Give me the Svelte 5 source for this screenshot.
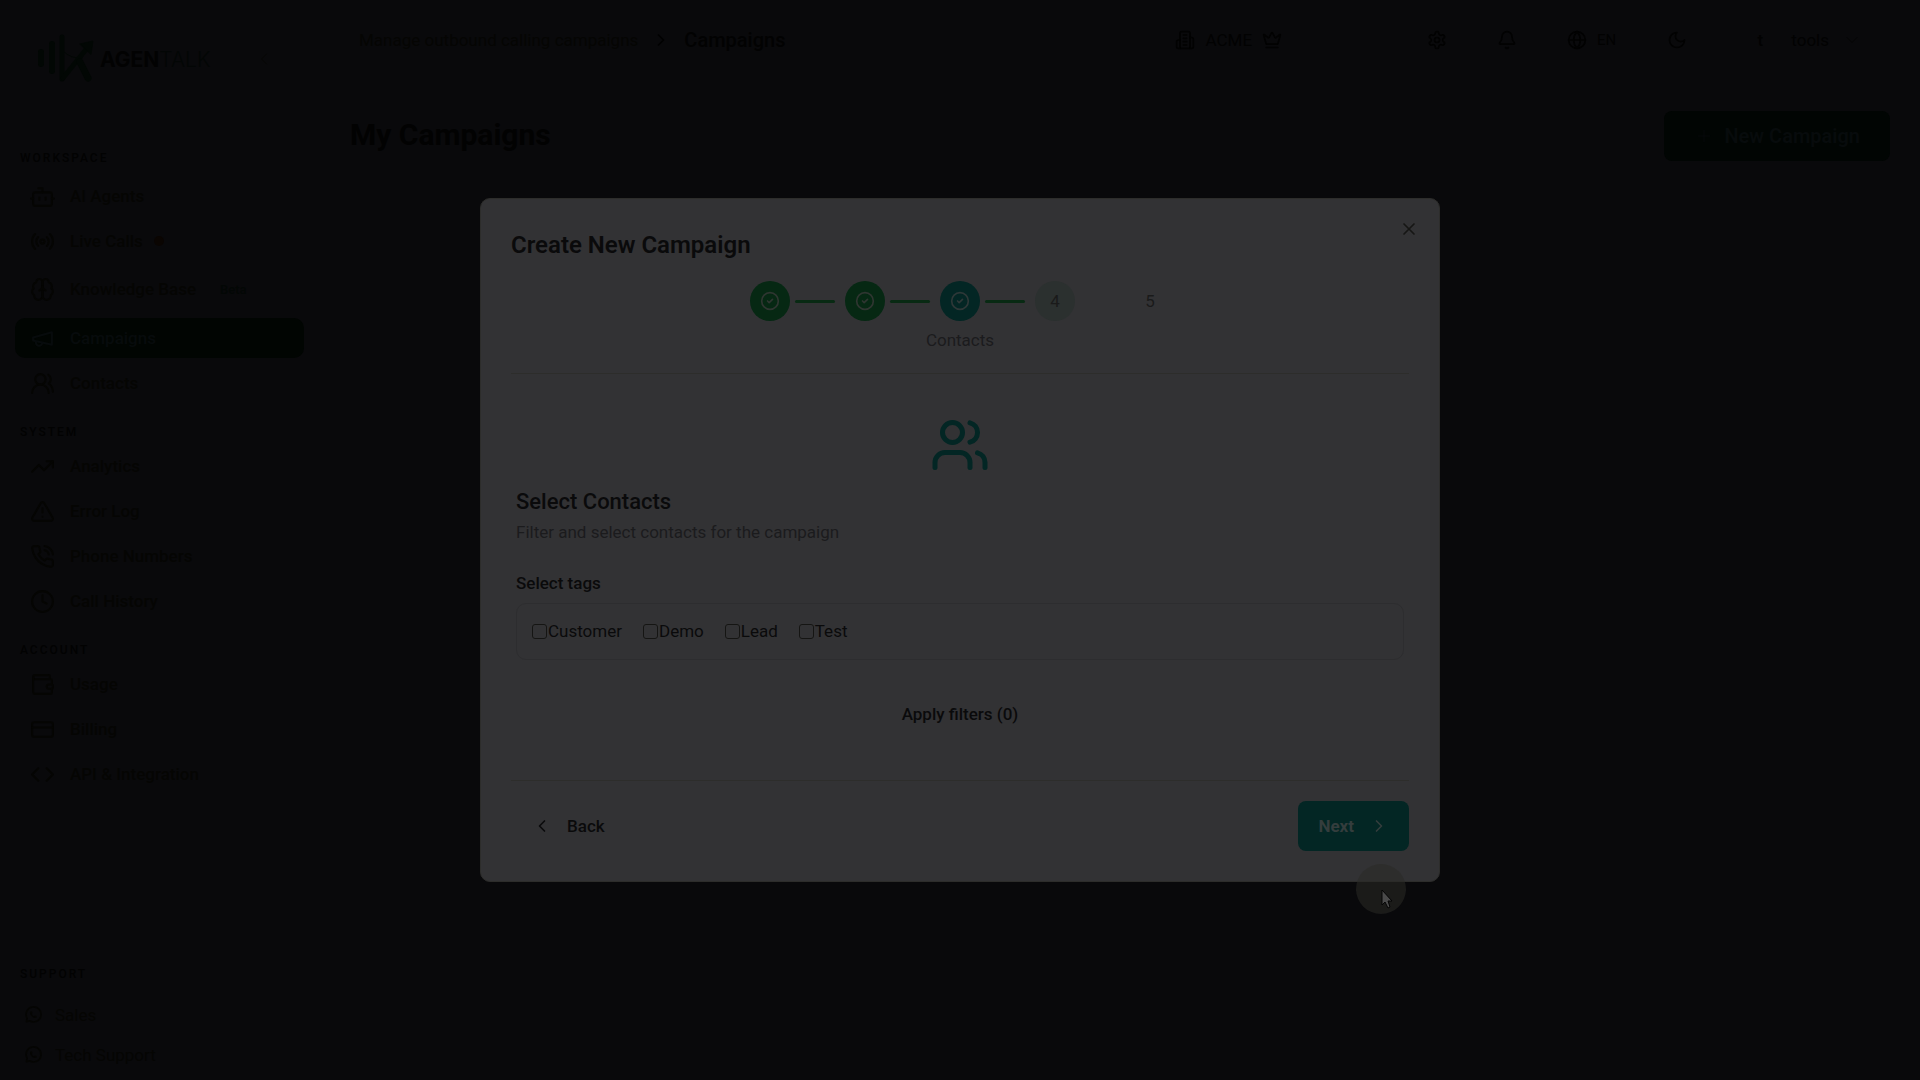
<script lang="ts">
  type NavItem = { icon: string; label: string; live?: boolean; beta?: boolean; active?: boolean }
  type NavGroup = { title: string; items: NavItem[] }

  const icons: Record<string, string> = {
    bot: '<path d="M12 8V4H8"/><rect width="18" height="13" x="3" y="8" rx="2"/><path d="M1 14h2M21 14h2M15 13v2M9 13v2"/>',
    radio: '<path d="M4.9 19.1C1 15.2 1 8.8 4.9 4.9M7.8 16.2c-2.3-2.3-2.3-6.1 0-8.5M16.2 7.8c2.3 2.3 2.3 6.1 0 8.5M19.1 4.9C23 8.8 23 15.1 19.1 19"/><circle cx="12" cy="12" r="2"/>',
    brain: '<path d="M12 5a3 3 0 1 0-5.997.125 4 4 0 0 0-2.526 5.77 4 4 0 0 0 .556 6.588A4 4 0 1 0 12 18Z"/><path d="M12 5a3 3 0 1 1 5.997.125 4 4 0 0 1 2.526 5.77 4 4 0 0 1-.556 6.588A4 4 0 1 1 12 18Z"/><path d="M9 13a4.5 4.5 0 0 0 3-4 4.5 4.5 0 0 0 3 4"/>',
    megaphone: '<path d="m3 11 18-5v12L3 14v-3z"/><path d="M11.6 16.8a3 3 0 1 1-5.8-1.6"/>',
    usersRound: '<path d="M18 21a8 8 0 0 0-16 0"/><circle cx="10" cy="8" r="5"/><path d="M22 20c0-3.37-2-6.5-4-8a5 5 0 0 0-.45-8.3"/>',
    trending: '<path d="M16 7h6v6"/><path d="m22 7-8.5 8.5-5-5L2 17"/>',
    alert: '<path d="m21.73 18-8-14a2 2 0 0 0-3.48 0l-8 14A2 2 0 0 0 4 21h16a2 2 0 0 0 1.73-3Z"/><path d="M12 9v4M12 17h.01"/>',
    phone: '<path d="M22 16.92v3a2 2 0 0 1-2.18 2 19.79 19.79 0 0 1-8.63-3.07 19.5 19.5 0 0 1-6-6 19.79 19.79 0 0 1-3.07-8.67A2 2 0 0 1 4.11 2h3a2 2 0 0 1 2 1.72 12.84 12.84 0 0 0 .7 2.81 2 2 0 0 1-.45 2.11L8.09 9.91a16 16 0 0 0 6 6l1.27-1.27a2 2 0 0 1 2.11-.45 12.84 12.84 0 0 0 2.81.7A2 2 0 0 1 22 16.92z"/><path d="M14 2a9 9 0 0 1 8 8M14 6a5 5 0 0 1 4 4"/>',
    clock: '<circle cx="12" cy="12" r="10"/><path d="M12 6v6l4 2"/>',
    wallet: '<path d="M19 7V4a1 1 0 0 0-1-1H5a2 2 0 0 0 0 4h15a1 1 0 0 1 1 1v4h-3a2 2 0 0 0 0 4h3a1 1 0 0 0 1-1v-2a1 1 0 0 0-1-1"/><path d="M3 5v14a2 2 0 0 0 2 2h15a1 1 0 0 0 1-1v-4"/>',
    card: '<rect width="20" height="14" x="2" y="5" rx="2"/><path d="M2 10h20"/>',
    code: '<path d="m16 18 6-6-6-6M8 6l-6 6 6 6"/>',
    whatsapp: '<path d="M4 20 5 16a9 9 0 1 1 3 3Z"/><path d="M8.5 8c-1 4 4 8.500 7.500 7.500l.5-2-2-1-1.5 1q-2-1-2.5-3l1-1-1-2z" fill="currentColor" stroke="none"/>',
    chevronLeft: '<path d="m15 18-6-6 6-6"/>',
    chevronRight: '<path d="m9 18 6-6-6-6"/>',
    chevronDown: '<path d="m6 9 6 6 6-6"/>',
    building: '<path d="M6 22V4a2 2 0 0 1 2-2h8a2 2 0 0 1 2 2v18Z"/><path d="M6 12H4a2 2 0 0 0-2 2v6a2 2 0 0 0 2 2h2M18 9h2a2 2 0 0 1 2 2v9a2 2 0 0 1-2 2h-2M10 6h4M10 10h4M10 14h4M10 18h4"/>',
    crown: '<path d="M11.56 3.27a.5.5 0 0 1 .88 0L15.4 8.87a1 1 0 0 0 1.51.3L21.18 5.5a.5.5 0 0 1 .8.52l-2.83 10.25a1 1 0 0 1-.96.73H5.81a1 1 0 0 1-.96-.73L2.02 6.02a.5.5 0 0 1 .8-.52l4.28 3.66a1 1 0 0 0 1.51-.3z"/><path d="M5 21h14"/>',
    gear: '<path d="M12.22 2h-.44a2 2 0 0 0-2 2v.18a2 2 0 0 1-1 1.73l-.43.25a2 2 0 0 1-2 0l-.15-.08a2 2 0 0 0-2.73.73l-.22.38a2 2 0 0 0 .73 2.73l.15.1a2 2 0 0 1 1 1.72v.51a2 2 0 0 1-1 1.74l-.15.09a2 2 0 0 0-.73 2.73l.22.38a2 2 0 0 0 2.73.73l.15-.08a2 2 0 0 1 2 0l.43.25a2 2 0 0 1 1 1.73V20a2 2 0 0 0 2 2h.44a2 2 0 0 0 2-2v-.18a2 2 0 0 1 1-1.73l.43-.25a2 2 0 0 1 2 0l.15.08a2 2 0 0 0 2.73-.73l.22-.39a2 2 0 0 0-.73-2.73l-.15-.08a2 2 0 0 1-1-1.74v-.5a2 2 0 0 1 1-1.74l.15-.09a2 2 0 0 0 .73-2.73l-.22-.38a2 2 0 0 0-2.73-.73l-.15.08a2 2 0 0 1-2 0l-.43-.25a2 2 0 0 1-1-1.73V4a2 2 0 0 0-2-2z"/><circle cx="12" cy="12" r="3"/>',
    bell: '<path d="M10.27 21a2 2 0 0 0 3.46 0M3.26 15.33A1 1 0 0 0 4 17h16a1 1 0 0 0 .74-1.67C19.41 13.96 18 12.5 18 8A6 6 0 0 0 6 8c0 4.5-1.41 5.96-2.74 7.33"/>',
    globe: '<circle cx="12" cy="12" r="10"/><path d="M12 2a14.5 14.5 0 0 0 0 20 14.5 14.5 0 0 0 0-20M2 12h20"/>',
    moon: '<path d="M12 3a6 6 0 0 0 9 9 9 9 0 1 1-9-9Z"/>',
    plus: '<path d="M5 12h14M12 5v14"/>',
    close: '<path d="M18 6 6 18M6 6l12 12"/>',
    check: '<circle cx="12" cy="12" r="10"/><path d="m9 12 2 2 4-4"/>',
    users: '<path d="M16 21v-2a4 4 0 0 0-4-4H6a4 4 0 0 0-4 4v2"/><circle cx="9" cy="7" r="4"/><path d="M22 21v-2a4 4 0 0 0-3-3.87M16 3.13a4 4 0 0 1 0 7.75"/>'
  }

  const groups: NavGroup[] = [
    {
      title: 'WORKSPACE',
      items: [
        { icon: 'bot', label: 'AI Agents' },
        { icon: 'radio', label: 'Live Calls', live: true },
        { icon: 'brain', label: 'Knowledge Base', beta: true },
        { icon: 'megaphone', label: 'Campaigns', active: true },
        { icon: 'usersRound', label: 'Contacts' }
      ]
    },
    {
      title: 'SYSTEM',
      items: [
        { icon: 'trending', label: 'Analytics' },
        { icon: 'alert', label: 'Error Log' },
        { icon: 'phone', label: 'Phone Numbers' },
        { icon: 'clock', label: 'Call History' }
      ]
    },
    {
      title: 'ACCOUNT',
      items: [
        { icon: 'wallet', label: 'Usage' },
        { icon: 'card', label: 'Billing' },
        { icon: 'code', label: 'API & Integration' }
      ]
    }
  ]

  const steps = [1, 2, 3, 4, 5]
  const current = 3
  const tags = ['Customer', 'Demo', 'Lead', 'Test']
  const applied = 0
  let selected: string[] = $state([])
</script>

{#snippet icon(name: string, size: number, stroke = 2)}
  <svg
    width={size}
    height={size}
    viewBox="0 0 24 24"
    fill="none"
    stroke="currentColor"
    stroke-width={stroke}
    stroke-linecap="round"
    stroke-linejoin="round"
    aria-hidden="true">{@html icons[name]}</svg
  >
{/snippet}

<div class="layout">
  <aside class="sidebar">
    <div class="brand">
      <svg class="mark" width="56" height="50" viewBox="0 0 56 50" fill="none" stroke="currentColor" stroke-linecap="round">
        <path d="M3 18v12M14 10v27" stroke-width="6" />
        <path d="M24 3v42" stroke-width="5" />
        <path d="M25 44 50 13" stroke-width="5" />
        <path d="m42 28 8 16" stroke-width="7" />
        <path d="m42 10 13-3-2 13z" fill="currentColor" stroke-width="1" />
        <path d="M25 17q8 8 19 7" stroke-width="1" />
      </svg>
      <span class="name">AGEN<span>TALK</span></span>
      <button class="plain collapse" aria-label="Collapse sidebar">{@render icon('chevronLeft', 20, 1)}</button>
    </div>

    <nav>
      {#each groups as group}
        <section>
          <h2>{group.title}</h2>
          {#each group.items as item}
            <a href="#top" class="item" class:active={item.active} class:tall={item.beta}>
              {@render icon(item.icon, 25, 2)}
              <span>{item.label}</span>
              {#if item.live}<i class="dot"></i>{/if}
              {#if item.beta}<span class="beta">Beta</span>{/if}
            </a>
          {/each}
        </section>
      {/each}
    </nav>

    <section class="support">
      <h2>SUPPORT</h2>
      <a href="#top">{@render icon('whatsapp', 20, 2)}Sales</a>
      <a href="#top">{@render icon('whatsapp', 20, 2)}Tech Support</a>
    </section>
  </aside>

  <div class="page">
    <header>
      <div class="crumbs">
        <span>Manage outbound calling campaigns</span>
        {@render icon('chevronRight', 20, 2)}
        <strong>Campaigns</strong>
      </div>
      <div class="tools">
        <button class="plain org">{@render icon('building', 20, 2)}<span>ACME</span>{@render icon('crown', 20, 2)}</button>
        <button class="plain square" aria-label="Settings">{@render icon('gear', 20, 2)}</button>
        <button class="plain square" aria-label="Notifications">{@render icon('bell', 20, 2)}</button>
        <button class="plain lang">{@render icon('globe', 20, 2)}EN</button>
        <button class="plain square" aria-label="Dark mode">{@render icon('moon', 20, 2)}</button>
        <button class="plain account"><b>t</b><span>tools</span>{@render icon('chevronDown', 20, 1)}</button>
      </div>
    </header>

    <main>
      <h1>My Campaigns</h1>
      <button class="new">{@render icon('plus', 20, 1)}New Campaign</button>
    </main>
  </div>
</div>

<div class="overlay">
  <div class="dialog" role="dialog" aria-labelledby="dialog-title">
    <button class="plain close" aria-label="Close">{@render icon('close', 20, 2)}</button>
    <h2 id="dialog-title">Create New Campaign</h2>

    <div class="steps">
      {#each steps as step}
        <div class="step" class:done={step < current} class:current={step === current} class:next={step === current + 1}>
          {#if step <= current}
            {@render icon('check', 20, 2)}
          {:else}
            {step}
          {/if}
        </div>
        {#if step < steps.length}
          <div class="line" class:filled={step <= current}></div>
        {/if}
      {/each}
    </div>
    <p class="step-name">Contacts</p>

    <div class="body">
      <div class="hero">{@render icon('users', 60, 2)}</div>
      <h3>Select Contacts</h3>
      <p class="hint">Filter and select contacts for the campaign</p>

      <fieldset>
        <legend>Select tags</legend>
        <div class="tags">
          {#each tags as tag}
            <label><input type="checkbox" value={tag} bind:group={selected} />{tag}</label>
          {/each}
        </div>
      </fieldset>

      <button class="plain apply">Apply filters ({applied})</button>
    </div>

    <footer>
      <button class="plain back">{@render icon('chevronLeft', 20, 2)}Back</button>
      <button class="forward">Next{@render icon('chevronRight', 20, 2)}</button>
    </footer>
  </div>
</div>

<!-- click highlight -->
<div class="pointer">
  <svg width="12" height="20" viewBox="0 0 12 20">
    <path d="M1 1v15l3-3 3 6 2-1-2-6h4z" fill="#4a4a4a" stroke="#050505" stroke-width="1" />
  </svg>
</div>

<style>
  :global(body) {
    margin: 0;
    background: #09090b;
    font-family: Roboto, 'Liberation Sans', sans-serif;
    font-size: 17px;
    line-height: 25px;
  }

  h1,
  h2,
  h3,
  p {
    margin: 0;
  }

  a {
    text-decoration: none;
  }

  button {
    display: flex;
    align-items: center;
    justify-content: center;
    padding: 0;
    border: none;
    font: inherit;
    cursor: pointer;
  }

  svg {
    display: block;
    flex-shrink: 0;
  }

  .plain {
    background: none;
    color: inherit;
  }

  .layout {
    display: flex;
    min-height: 100vh;
    color: #020202;
  }

  .sidebar {
    display: flex;
    flex-direction: column;
    width: 320px;
    box-sizing: border-box;
    padding: 0 16px 5px 15px;
    color: #050503;
  }

  .brand {
    display: flex;
    align-items: center;
    height: 118px;
    padding: 0 30px 0 23px;
  }

  .mark {
    color: #020704;
  }

  .name {
    margin-left: 6px;
    font-family: Inter, sans-serif;
    font-size: 21px;
    font-weight: 700;
    color: #020202;
  }

  .name span {
    font-weight: 300;
    color: #030605;
  }

  .collapse {
    margin-left: auto;
  }

  nav {
    display: flex;
    flex-direction: column;
    gap: 20px;
    padding-top: 31px;
  }

  section {
    display: flex;
    flex-direction: column;
    gap: 5px;
  }

  .sidebar h2 {
    padding: 0 5px;
    font-size: 12px;
    line-height: 18px;
    font-weight: 500;
    letter-spacing: 2px;
    color: #020202;
  }

  nav section:first-child h2 {
    margin-bottom: 4px;
  }

  .item {
    display: flex;
    align-items: center;
    gap: 15px;
    height: 40px;
    padding: 0 15px;
    border-radius: 10px;
    font-weight: 500;
    color: #050503;
  }

  .item.tall {
    height: 47px;
  }

  .item.active {
    background: #010502;
    color: #070b0c;
  }

  .dot {
    width: 10px;
    height: 10px;
    margin-left: -4px;
    border-radius: 50%;
    background: #0a0502;
  }

  .beta {
    margin-left: 9px;
    font-size: 13px;
    color: #030705;
  }

  .support {
    gap: 0;
    margin-top: auto;
  }

  .support h2 {
    margin-bottom: 12px;
  }

  .support a {
    display: flex;
    align-items: center;
    gap: 12px;
    height: 40px;
    padding-left: 8px;
    color: #050503;
  }

  .page {
    flex: 1;
    min-width: 0;
  }

  header {
    display: flex;
    align-items: center;
    justify-content: space-between;
    height: 80px;
    padding: 0 58px 0 39px;
  }

  .crumbs {
    display: flex;
    align-items: center;
    gap: 13px;
  }

  .crumbs span {
    color: #050503;
  }

  .crumbs strong {
    font-size: 20px;
    font-weight: 500;
  }

  .tools {
    display: flex;
    align-items: center;
    height: 50px;
  }

  .org {
    gap: 10px;
    margin-right: 130px;
  }

  .square {
    width: 50px;
    height: 50px;
    margin-right: 20px;
  }

  .lang {
    gap: 10px;
    margin: 0 20px 0 15px;
    padding-right: 16px;
    font-size: 15px;
  }

  .account {
    gap: 13px;
    margin-left: 20px;
  }

  .account b {
    width: 36px;
    font-weight: 500;
  }

  main {
    display: flex;
    align-items: center;
    justify-content: space-between;
    padding: 31px 30px;
  }

  h1 {
    font-size: 30px;
    line-height: 40px;
    font-weight: 700;
    padding-bottom: 2px;
    color: #020202;
  }

  .new {
    gap: 10px;
    height: 50px;
    padding: 0 30px;
    border-radius: 8px;
    background: #010503;
    color: #070b0c;
    font-size: 20px;
    font-weight: 600;
  }

  .overlay {
    position: fixed;
    inset: 0;
    display: flex;
    align-items: center;
    justify-content: center;
  }

  .dialog {
    position: relative;
    width: 100%;
    max-width: 960px;
    box-sizing: border-box;
    padding: 30px;
    border: 1px solid #2d2d2b;
    border-radius: 10px;
    background: #323234;
    color: #0a0a0b;
  }

  .dialog h2 {
    font-size: 24px;
    line-height: 32px;
    font-weight: 600;
  }

  .close {
    position: absolute;
    top: 20px;
    right: 20px;
    color: #161614;
  }

  .steps {
    display: flex;
    align-items: center;
    justify-content: center;
    margin-top: 20px;
  }

  .step {
    display: flex;
    align-items: center;
    justify-content: center;
    width: 40px;
    height: 40px;
    border-radius: 50%;
    color: #1a1a1a;
  }

  .step.done {
    background: #062813;
    color: #2f3631;
  }

  .step.current {
    background: #032624;
    color: #2e3838;
  }

  .step.next {
    background: #2b302f;
  }

  .line {
    width: 40px;
    height: 3px;
    margin: 0 10px 0 5px;
    border-radius: 2px;
  }

  .line.filled {
    background: #082a13;
  }

  .step-name {
    margin-top: 7px;
    padding-bottom: 20px;
    border-bottom: 1px solid #2d2d2b;
    text-align: center;
    color: #1b1b1d;
  }

  .body {
    padding: 41px 5px;
  }

  .hero {
    display: flex;
    justify-content: center;
    color: #032624;
  }

  h3 {
    margin-top: 12px;
    font-size: 22px;
    line-height: 30px;
    font-weight: 500;
  }

  .hint {
    margin-top: 3px;
    color: #1b1b1d;
  }

  fieldset {
    min-width: 0;
    margin: 26px 0 0;
    padding: 0;
    border: none;
  }

  legend {
    padding: 0;
    font-weight: 500;
  }

  .tags {
    display: flex;
    gap: 21px;
    margin-top: 7px;
    padding: 15px;
    border: 1px solid #2d2d2f;
    border-radius: 10px;
  }

  .tags label {
    display: flex;
    align-items: center;
    gap: 1px;
  }

  .tags input {
    appearance: none;
    width: 15px;
    height: 15px;
    margin: 0;
    border: 1px solid #151513;
    border-radius: 3px;
  }

  .tags input:checked {
    background: #032624;
  }

  .apply {
    width: 100%;
    height: 50px;
    margin-top: 29px;
    font-weight: 500;
  }

  footer {
    display: flex;
    justify-content: space-between;
    padding-top: 20px;
    border-top: 1px solid #2d2d2b;
  }

  footer button {
    height: 50px;
    font-weight: 500;
  }

  .back {
    gap: 15px;
    padding: 0 21px;
  }

  .forward {
    gap: 15px;
    padding: 0 20px;
    border-radius: 8px;
    background: #032624;
    color: #343d3d;
    font-weight: 700;
  }

  .pointer {
    position: fixed;
    left: 1356px;
    top: 864px;
    width: 25px;
    height: 25px;
    padding: 25px 0 0 25px;
    border-radius: 50%;
    background: rgb(42 42 38 / 55%);
  }
</style>
